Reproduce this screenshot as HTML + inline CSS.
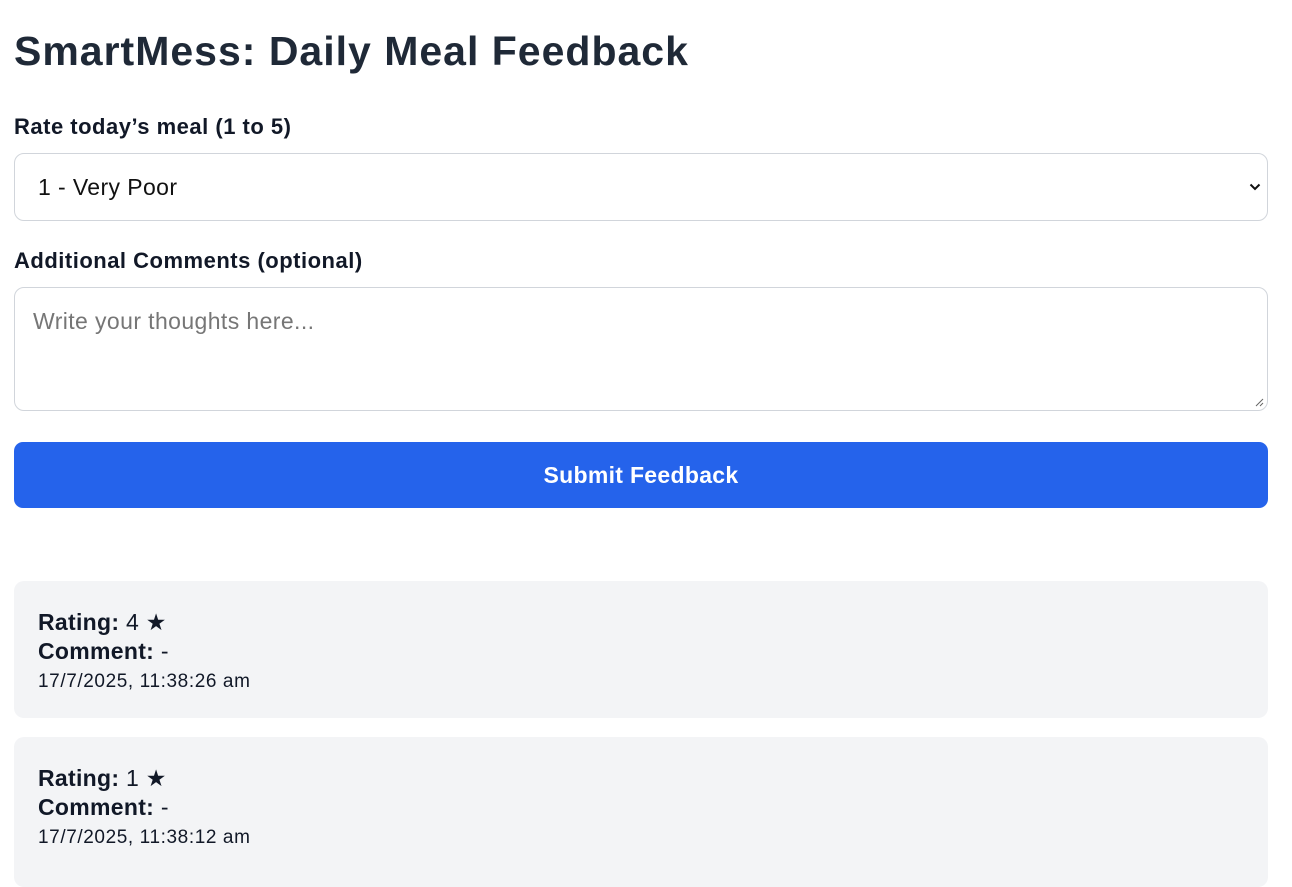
<!DOCTYPE html>
<html><head><style>
body{margin:0;background:#fff;font-family:"Liberation Sans",sans-serif;color:#1f2937;width:1292px;height:861px;overflow:hidden;position:relative}
.a{position:absolute;white-space:nowrap}
h1{position:absolute;left:14px;top:28px;margin:0;font-size:41px;font-weight:bold;color:#1f2937;letter-spacing:1px}
.lbl{font-size:22px;font-weight:bold;color:#111827;left:14px;letter-spacing:0.5px}
.box{position:absolute;left:14px;width:1252px;border:1px solid #d1d5db;border-radius:10px;background:#fff}
.btn{position:absolute;left:14px;top:442px;width:1254px;height:66px;background:#2563eb;border-radius:9px;color:#fff;font-weight:bold;font-size:23px;text-align:center;line-height:66px;letter-spacing:0.3px}
.card{position:absolute;left:14px;width:1254px;background:#f3f4f6;border-radius:10px}
.card .r{position:absolute;left:24px;font-size:23px;color:#111827;white-space:nowrap;letter-spacing:0.3px}
.card .d{position:absolute;left:24px;font-size:19px;color:#111827;white-space:nowrap;letter-spacing:0.6px}
</style></head><body>
<h1>SmartMess: Daily Meal Feedback</h1>
<div class="a lbl" style="top:114px">Rate today’s meal (1 to 5)</div>
<div class="box" style="top:153px;height:66px">
<div class="a" style="left:23px;top:20px;font-size:23px;color:#111;letter-spacing:0.4px">1 - Very Poor</div>
<svg class="a" style="right:6px;top:28px" width="12" height="10" viewBox="0 0 12 10"><path d="M1.5 2.5L6 7l4.5-4.5" stroke="#111" stroke-width="2" fill="none"/></svg>
</div>
<div class="a lbl" style="top:248px">Additional Comments (optional)</div>
<div class="box" style="top:287px;height:122px">
<div class="a" style="left:18px;top:20px;font-size:23px;color:#767676;letter-spacing:0.4px">Write your thoughts here...</div>
<svg class="a" style="right:3px;bottom:3px" width="9" height="9"><path d="M8 1L1 8M8 5L5 8" stroke="#666" stroke-width="1"/></svg>
</div>
<div class="btn">Submit Feedback</div>
<div class="card" style="top:581px;height:137px">
<div class="r" style="top:28px"><b>Rating:</b> 4 ★</div>
<div class="r" style="top:57px"><b>Comment:</b> -</div>
<div class="d" style="top:90px">17/7/2025, 11:38:26 am</div>
</div>
<div class="card" style="top:737px;height:150px">
<div class="r" style="top:28px"><b>Rating:</b> 1 ★</div>
<div class="r" style="top:57px"><b>Comment:</b> -</div>
<div class="d" style="top:90px">17/7/2025, 11:38:12 am</div>
</div>
</body></html>
